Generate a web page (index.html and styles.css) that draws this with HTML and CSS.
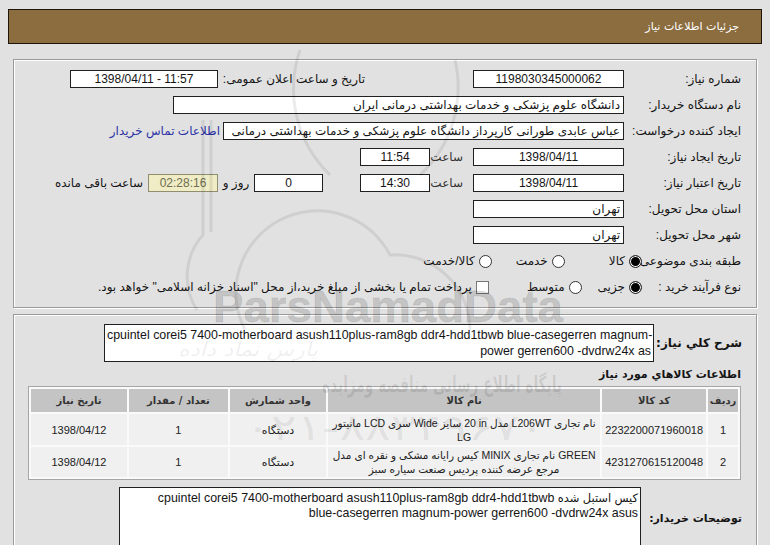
FILE: index.html
```html
<!DOCTYPE html>
<html lang="fa" dir="rtl">
<head>
    <meta charset="UTF-8">
    <meta name="viewport" content="width=device-width, initial-scale=1.0">
    <title>جزئیات اطلاعات نیاز</title>
    <link rel="stylesheet" href="styles.css">
</head>
<body>
<div class="page">
    <div class="header">جزئیات اطلاعات نیاز</div>

    <div class="panel info">
        <div class="row">
            <span class="lbl">شماره نیاز:</span>
            <span class="box w151 center" dir="ltr">1198030345000062</span>
            <span class="lbl-mid">تاریخ و ساعت اعلان عمومی:</span>
            <span class="box w148 center" dir="ltr">1398/04/11 - 11:57</span>
        </div>
        <div class="row">
            <span class="lbl">نام دستگاه خریدار:</span>
            <span class="box w451">دانشگاه علوم پزشکی و خدمات بهداشتی درمانی ایران</span>
        </div>
        <div class="row">
            <span class="lbl">ایجاد کننده درخواست:</span>
            <span class="box w401">عباس عابدی طورانی کارپرداز دانشگاه علوم پزشکی و خدمات بهداشتی درمانی</span>
            <a class="contact" href="#">اطلاعات تماس خریدار</a>
        </div>
        <div class="row">
            <span class="lbl">تاریخ ایجاد نیاز:</span>
            <span class="box w151 center" dir="ltr">1398/04/11</span>
            <span class="sep">ساعت</span>
            <span class="box w70 center" dir="ltr">11:54</span>
        </div>
        <div class="row">
            <span class="lbl">تاریخ اعتبار نیاز:</span>
            <span class="box w151 center" dir="ltr">1398/04/11</span>
            <span class="sep">ساعت</span>
            <span class="box w70 center" dir="ltr">14:30</span>
            <span class="box w69 center days">0</span>
            <span class="unit">روز و</span>
            <span class="box w70 center remain" dir="ltr">02:28:16</span>
            <span class="remain-lbl">ساعت باقی مانده</span>
        </div>
        <div class="row">
            <span class="lbl">استان محل تحویل:</span>
            <span class="box w151">تهران</span>
        </div>
        <div class="row">
            <span class="lbl">شهر محل تحویل:</span>
            <span class="box w151">تهران</span>
        </div>
        <div class="row">
            <span class="lbl short">طبقه بندی موضوعی:</span>
            <span class="radio on"></span><span class="opt opt-a">کالا</span>
            <span class="radio"></span><span class="opt opt-b">خدمت</span>
            <span class="radio"></span><span class="opt">کالا/خدمت</span>
        </div>
        <div class="row">
            <span class="lbl short">نوع فرآیند خرید :</span>
            <span class="radio on"></span><span class="opt opt-c">جزیی</span>
            <span class="radio"></span><span class="opt opt-d">متوسط</span>
            <span class="check"></span><span class="opt">پرداخت تمام یا بخشی از مبلغ خرید،از محل "اسناد خزانه اسلامی" خواهد بود.</span>
        </div>
    </div>

    <div class="panel needs">
        <div class="desc-row">
            <span class="bold-lbl big w88">شرح کلي نياز:</span>
            <div class="textbox w550">
                <div dir="ltr">cpuintel corei5 7400-motherboard asush110plus-ram8gb ddr4-hdd1tbwb blue-casegerren magnum-</div>
                <div dir="ltr">power gerren600 -dvdrw24x as</div>
            </div>
        </div>

        <div class="section-title">اطلاعات كالاهاي مورد نياز</div>

        <table class="items">
            <tr>
                <th class="c-no">ردیف</th>
                <th class="c-code">کد کالا</th>
                <th class="c-name">نام کالا</th>
                <th class="c-unit">واحد شمارش</th>
                <th class="c-qty">تعداد / مقدار</th>
                <th class="c-date">تاریخ نیاز</th>
            </tr>
            <tr class="r1">
                <td>1</td>
                <td>2232200071960018</td>
                <td class="name" dir="ltr">مانیتور LCD سری Wide سایز&lrm; 20 in مدل L206WT نام تجاری<br>LG</td>
                <td>دستگاه</td>
                <td>1</td>
                <td>1398/04/12</td>
            </tr>
            <tr class="r2">
                <td>2</td>
                <td>4231270615120048</td>
                <td class="name" dir="ltr">کیس رایانه مشکی و نقره ای مدل MINIX نام تجاری GREEN<br>مرجع عرضه کننده پردیس صنعت سیاره سبز</td>
                <td>دستگاه</td>
                <td>1</td>
                <td>1398/04/12</td>
            </tr>
        </table>

        <div class="desc-row buyer">
            <span class="bold-lbl w101">توضیحات خریدار:</span>
            <div class="textbox tall w522">
                <div><span class="fa-small">کیس استبل شده</span> cpuintel corei5 7400-motherboard asush110plus-ram8gb ddr4-hdd1tbwb</div>
                <div dir="ltr">blue-casegerren magnum-power gerren600 -dvdrw24x asus</div>
            </div>
        </div>
    </div>

    <!-- watermark of the source site, drawn over the form -->
    <svg class="watermark" width="770" height="545" viewBox="0 0 770 545">
        <g fill="none" stroke="#000" stroke-opacity="0.08" stroke-width="3">
            <path d="M203 120 V235 A62 62 0 0 0 197 310"/>
            <path d="M211 120 V232"/>
            <path d="M245 330 A75 75 0 0 1 390 255 A75 75 0 0 1 470 330"/>
            <path d="M330 175 A120 120 0 0 1 300 50"/>
            <path d="M420 175 A120 120 0 0 0 455 60"/>
        </g>
        <text x="213" y="322" class="wm-latin" textLength="350" lengthAdjust="spacingAndGlyphs">ParsNamadData</text>
        <text x="248" y="356" class="wm-small" text-anchor="middle" textLength="140" lengthAdjust="spacingAndGlyphs">پارس نماد داده</text>
        <text x="442" y="392" class="wm-fa" text-anchor="middle" textLength="240" lengthAdjust="spacingAndGlyphs">پایگاه اطلاع رسانی مناقصه ومزایده</text>
        <text x="395" y="440" class="wm-num" text-anchor="middle" textLength="300" lengthAdjust="spacingAndGlyphs">۰۲۱-۸۸۳۴۹۶۷۰</text>
    </svg>
</div>
</body>
</html>
```

FILE: styles.css
```css
body {
    margin: 0;
    background-color: #e1e1e1;
    font-family: "Liberation Sans", "DejaVu Sans", sans-serif;
    font-size: 12px;
    color: #141414;
}
.page {
    position: relative;
    padding-top: 9px;
    height: 536px;
    overflow: hidden;
}
.header {
    margin: 0 8px;
    height: 33px;
    line-height: 33px;
    padding-right: 22px;
    background-color: #8b6d40;
    border: 1px solid #1e160a;
    color: #fff;
    font-family: "DejaVu Sans", sans-serif;
    font-size: 11px;
}
.panel {
    margin: 0 13px;
    border: 1px solid #9a9a9a;
    box-shadow: inset 1px 1px 0 #fff, 1px 1px 0 #fff;
}

/* top form */
.info {
    margin-top: 15px;
    padding: 6px 15px 7px 0;
}
.row {
    display: flex;
    align-items: center;
    height: 26px;
    white-space: nowrap;
}
.lbl {
    width: 117px;
    flex: none;
}
.lbl.short {
    width: 99px;
}
.lbl-mid {
    width: 137px;
    margin-right: 108px;
    margin-left: 10px;
}
.box {
    flex: none;
    box-sizing: border-box;
    height: 18px;
    line-height: 16px;
    padding: 0 3px;
    background-color: #fff;
    border: 1px solid #202020;
    overflow: hidden;
    white-space: nowrap;
}
.center {
    text-align: center;
}
.w70 { width: 70px; }
.w69 { width: 69px; }
.w148 { width: 148px; }
.w151 { width: 151px; }
.w401 { width: 401px; }
.w451 { width: 451px; }
.contact {
    margin-right: 3px;
    color: #2b33a6;
    text-decoration: none;
}
.sep {
    width: 43px;
    padding-right: 10px;
    box-sizing: border-box;
    color: #333;
}
.days {
    margin-right: 37px;
}
.unit {
    width: 36px;
    text-align: center;
}
.remain {
    background-color: #efecc6;
    border-color: #8f8f70;
    color: #6e6e50;
}
.remain-lbl {
    margin-right: 5px;
}
.radio {
    flex: none;
    width: 13px;
    height: 13px;
    box-sizing: border-box;
    border: 1px solid #333;
    border-radius: 50%;
    background-color: #fff;
}
.radio.on {
    background-color: #000;
    box-shadow: inset 0 0 0 1px #fff;
}
.check {
    flex: none;
    width: 13px;
    height: 13px;
    box-sizing: border-box;
    border: 1px solid #777;
    background-color: #fff;
}
.opt {
    margin-right: 4px;
}
.opt-a { margin-left: 44px; }
.opt-b { margin-left: 24px; }
.opt-c { margin-left: 16px; }
.opt-d { margin-left: 38px; }

/* needs panel */
.needs {
    margin-top: 6px;
    padding: 9px 14px 0 0;
    height: 250px;
}
.desc-row {
    display: flex;
    align-items: center;
}
.bold-lbl {
    flex: none;
    font-family: "DejaVu Sans", sans-serif;
    font-weight: bold;
    font-size: 11px;
}
.bold-lbl.big {
    font-size: 12px;
}
.w88 { width: 88px; }
.w101 { width: 101px; }
.w522 { width: 522px; }
.w550 { width: 550px; }
.textbox {
    box-sizing: border-box;
    height: 38px;
    padding: 2px 2px 0;
    line-height: 16px;
    font-size: 12.4px;
    background-color: #fff;
    border: 1px solid #202020;
    overflow: hidden;
    white-space: nowrap;
    text-align: right;
}
.textbox.tall {
    height: 62px;
    padding-top: 3px;
    line-height: 15px;
}
.fa-small {
    font-size: 11.5px;
}
.section-title {
    margin: 6px 1px 5px 0;
    font-family: "DejaVu Sans", sans-serif;
    font-weight: bold;
    font-size: 11px;
}
.items {
    width: 713px;
    border: 1px solid #a6a6a6;
    border-spacing: 2px;
    background-color: #fafafa;
    font-size: 11px;
    margin-right: 1px;
}
.items th {
    height: 21px;
    background-color: #c4c4c4;
    font-family: "DejaVu Sans", sans-serif;
    font-size: 10px;
    color: #333;
}
.items td {
    padding: 1px 2px;
    line-height: 14px;
    background-color: #f0f0f0;
    text-align: center;
    color: #222;
}
.items .r1 td { height: 29px; }
.items .r2 td { height: 27px; }
.items td.name {
    font-size: 10.5px;
}
.c-no { width: 28px; }
.c-code { width: 102px; }
.c-name { width: 277px; }
.c-unit { width: 96px; }
.c-qty { width: 99px; }
.c-date { width: 95px; }
.buyer {
    margin-top: 7px;
}

/* watermark */
.watermark {
    position: absolute;
    top: 0;
    left: 0;
    direction: ltr;
    pointer-events: none;
}
.wm-latin {
    font-family: "Liberation Sans", sans-serif;
    font-weight: bold;
    font-size: 44px;
    fill: #000;
    fill-opacity: 0.14;
    stroke: #000;
    stroke-opacity: 0.08;
    stroke-width: 1;
}
.wm-small {
    font-family: "DejaVu Sans", sans-serif;
    font-style: italic;
    font-size: 20px;
    fill: #000;
    fill-opacity: 0.07;
}
.wm-fa {
    font-family: "DejaVu Sans", sans-serif;
    font-weight: bold;
    font-size: 22px;
    fill: #000;
    fill-opacity: 0.1;
}
.wm-num {
    font-family: "DejaVu Sans", sans-serif;
    font-size: 36px;
    fill: #000;
    fill-opacity: 0.08;
}
```
